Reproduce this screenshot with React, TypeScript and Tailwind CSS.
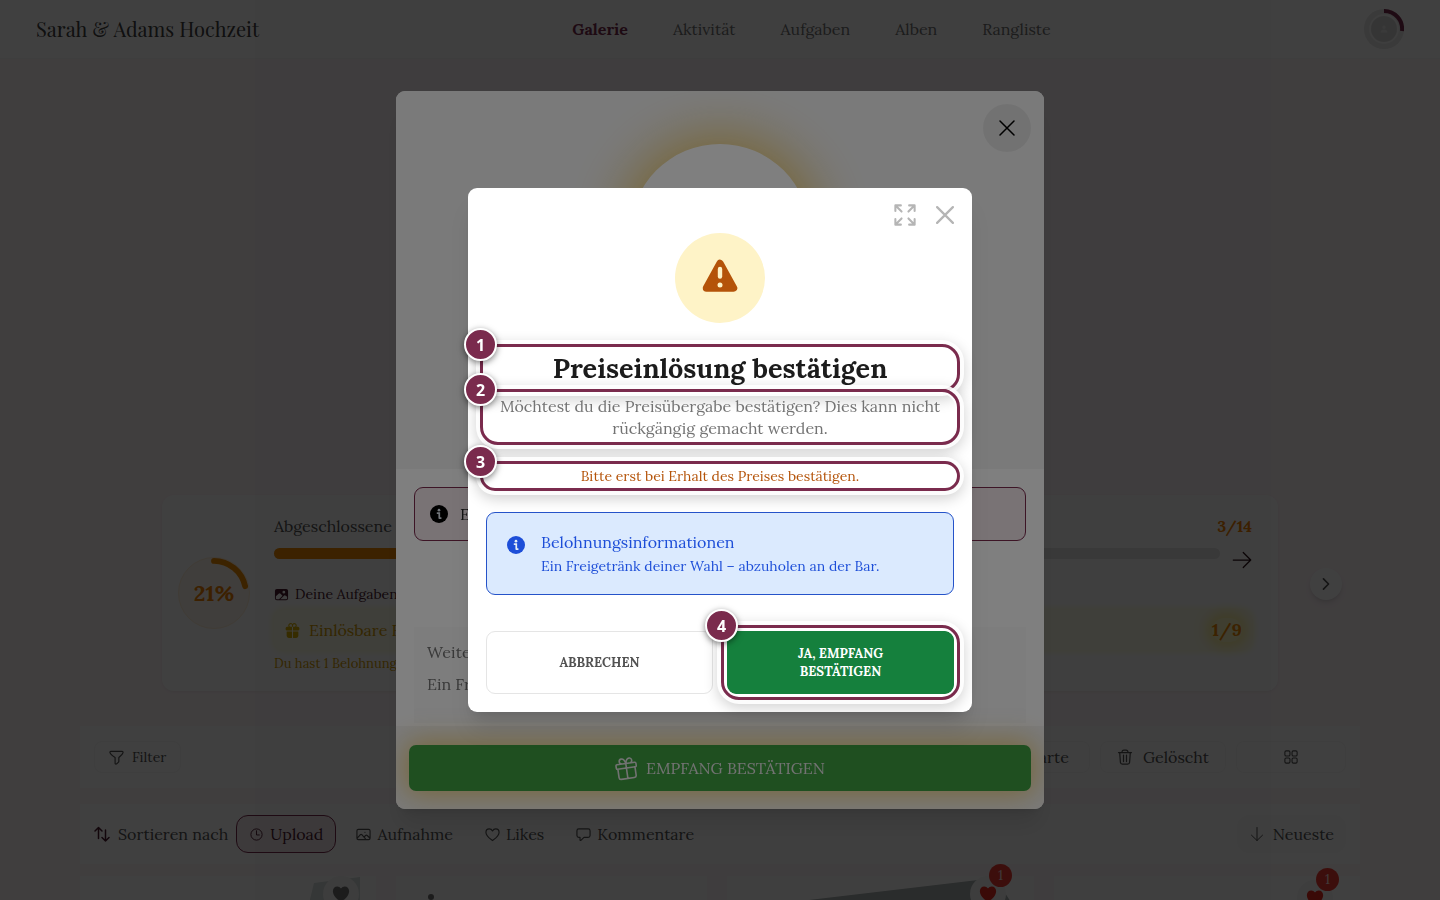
import React from "react";
import {
  IoGift, IoImage, IoTimeOutline, IoHeartOutline, IoChevronForward, IoHeart, IoPerson,
} from "react-icons/io5";

const SERIF = "font-['Lora','Liberation_Serif',serif]";

type IconProps = { d: string; size?: number; width?: number; className?: string };

function Line({ d, size = 16, width = 1.25, className = "" }: IconProps) {
  return (
    <svg width={size} height={size} viewBox="0 0 16 16" fill="none" stroke="currentColor" strokeWidth={width} strokeLinecap="round" strokeLinejoin="round" className={"shrink-0 " + className} aria-hidden="true">
      <path d={d} />
    </svg>
  );
}

const PATHS = {
  funnel: "M2 1.5h12c.8 0 1.2.7.9 1.4C14.300 4.700 12.500 6 10.500 8v4c0 .5-.2.9-.6 1.200l-1.700 1.500c-.8.600-1.700.300-1.700-.700V8C3.500 6 1.700 4.700 1.100 2.900.8 2.200 1.200 1.500 2 1.500z",
  trash: "M1.500 3.500h13M5 3.300C5 1.800 5.800 1 7 1h2c1.200 0 2 .8 2 2.300M2.700 3.500l.7 9.700c.1 1.200.8 1.800 1.900 1.800h5.400c1.100 0 1.800-.6 1.900-1.800l.7-9.700M6.500 6v6.500M9.500 6v6.500",
  grid: "M2.500 1h2.800q1.500 0 1.500 1.500v2.800q0 1.500-1.500 1.500H2.500Q1 6.800 1 5.300V2.500Q1 1 2.500 1zM10.700 1h2.800q1.500 0 1.500 1.500v2.800q0 1.500-1.500 1.500h-2.800q-1.500 0-1.500-1.500V2.500Q9.200 1 10.700 1zM2.500 9.200h2.800q1.500 0 1.500 1.500v2.800q0 1.500-1.500 1.500H2.500Q1 15 1 13.500v-2.800q0-1.500 1.500-1.500zM10.700 9.200h2.800q1.500 0 1.500 1.500v2.800q0 1.500-1.500 1.500h-2.800q-1.500 0-1.500-1.500v-2.800q0-1.500 1.500-1.500z",
  sort: "M4.500 12.500V1.500M1 5l3.500-3.500L8 5M11.500 4v11M8 11.500l3.500 3.500 3.500-3.500",
  image: "M2.500 2.500h11q1.500 0 1.500 1.500v8q0 1.500-1.500 1.500h-11Q1 13.500 1 12V4q0-1.500 1.500-1.500zM1.500 11.500l3-3.200c.6-.6 1.300-.6 1.900 0l3.600 4M8.800 10.500l1.400-1.400c.6-.6 1.200-.6 1.800 0l2.700 2.600M9.500 5.600h.1",
  chat: "M3 2h10q2 0 2 2v5q0 2-2 2H8.500l-3.300 3.200c-.4.4-.9.2-.9-.4V11H3Q1 11 1 9V4q0-2 2-2z",
  down: "M8 1.500v13M2.500 9.200 8 14.500l5.500-5.300",
  right: "M1 8h14M9 2l6 6-6 6",
  close: "M1 1l14 14M15 1 1 15",
  expand: "M1 5V1h4M1.300 1.300l4.200 4.200M11 1h4v4M14.700 1.300l-4.200 4.200M1 11v4h4M1.300 14.700l4.200-4.200M15 11v4h-4M14.700 14.700l-4.200-4.200",
  gift: "M1.800 4.500h12.400q.8 0 .8.800v1.600q0 .8-.8.800H1.800Q1 7.700 1 6.900V5.300q0-.8.800-.8zM2 7.700v5.800q0 1.500 1.500 1.500h9q1.500 0 1.500-1.500V7.700M8 4.500V15M8 4.500C7.500 2 6.300 1 5.200 1 3.300 1 3 4 5 4.500M8 4.500C8.500 2 9.700 1 10.800 1c1.900 0 2.200 3 .2 3.500",
};

function InfoIcon({ className = "" }: { className?: string }) {
  return (
    <svg width="18" height="18" viewBox="0 0 20 20" className={"shrink-0 " + className} aria-hidden="true">
      <circle cx="10" cy="10" r="10" fill="currentColor" />
      <circle cx="10" cy="5.700" r="1.500" fill="#e4ecf6" />
      <path d="M8.300 9h2v5.200M10.300 14.500h1.700" fill="none" stroke="#e4ecf6" strokeWidth="1.900" strokeLinecap="round" />
    </svg>
  );
}

function WarningIcon() {
  return (
    <svg width="36" height="34" viewBox="0 0 36 34" className="mb-1" aria-hidden="true">
      <path d="M18 4.500 31.500 29h-27z" fill="#b45309" stroke="#b45309" strokeWidth="7.500" strokeLinejoin="round" />
      <path d="M18 10v7.500" stroke="#fef3c7" strokeWidth="4.400" strokeLinecap="round" />
      <circle cx="18" cy="26" r="2.500" fill="#fef3c7" />
    </svg>
  );
}

function Marker({ n }: { n: number }) {
  return (
    <>
      <span
        aria-hidden="true"
        className="pointer-events-none absolute -inset-1.5 rounded-[18px] border-[3px] border-[#7a2b4d] shadow-[0_0_0_4px_rgba(255,255,255,0.9),0_4px_14px_4px_rgba(0,0,0,0.18),inset_0_0_0_2px_rgba(255,255,255,0.9)]"
      />
      <span className="absolute -top-[22px] -left-[22px] z-10 flex size-[33px] items-center justify-center rounded-full border-2 border-white bg-[#7a2b4d] font-['Noto_Sans',sans-serif] text-[16px] leading-none font-bold text-white shadow-[0_2px_6px_rgba(0,0,0,0.5)]">
        {n}
      </span>
    </>
  );
}

function Header() {
  const links = ["Galerie", "Aktivität", "Aufgaben", "Alben", "Rangliste"];
  return (
    <header className="flex h-[59px] items-center justify-between border-b border-neutral-100 bg-white px-9">
      <a href="#start" className="font-['Playfair_Display','Liberation_Serif',serif] text-[20px] leading-8 text-neutral-700">Sarah &amp; Adams Hochzeit</a>
      <nav className="flex gap-[45px] text-[16px] leading-6 text-neutral-500">
        {links.map((l, i) => (
          <a key={l} href={"#" + l} className={i === 0 ? "font-bold text-[#7a2b4d]" : ""}>{l}</a>
        ))}
      </nav>
      <button aria-label="Profil" className="relative flex size-10 items-center justify-center rounded-full bg-neutral-200">
        <span className="flex size-[30px] items-center justify-center rounded-full border-2 border-neutral-100 bg-neutral-300 text-neutral-200"><IoPerson size={8} /></span>
        <svg className="absolute inset-0" viewBox="0 0 40 40" fill="none" stroke="#7a2b4d" strokeWidth="4">
          <path d="M20 2a18 18 0 0 1 18 20" />
        </svg>
      </button>
    </header>
  );
}

function Progress() {
  return (
    <section className="relative mx-[162px] mt-[436px] flex h-[196px] items-center gap-6 rounded-xl bg-white pr-[26px] pl-4 shadow-[0_1px_3px_rgba(0,0,0,0.06)]">
      <div className="relative flex size-[72px] shrink-0 items-center justify-center rounded-full border border-orange-100 bg-orange-50 text-[22px] font-bold text-[#f08000]">
        21%
        <svg className="absolute inset-0" viewBox="0 0 72 72" fill="none" stroke="#f08a00" strokeWidth="6" strokeLinecap="round">
          <path d="M36 3a33 33 0 0 1 32 26" />
        </svg>
      </div>
      <div className="flex min-w-0 grow flex-col pt-0.5">
        <div className="flex justify-between text-[16px] leading-6">
          <span className="text-neutral-600">Abgeschlossene Fotoaufgaben</span>
          <span className="font-bold text-[#f08000]">3/14</span>
        </div>
        <div className="flex h-11 items-center gap-3">
          <div className="mb-3.5 h-[11px] grow rounded-full bg-neutral-200"><div className="h-full w-[21%] rounded-full bg-[#f08a00]" /></div>
          <Line d={PATHS.right} size={20} width={1} className="text-[#2a1018]" />
        </div>
        <div className="flex items-center gap-1.5 text-[14px] leading-6 text-[#4a1a2e]"><IoImage size={15} />Deine Aufgaben-Fotos</div>
        <div className="mt-1 flex h-10 items-center justify-between rounded-lg bg-yellow-50 px-2.5 text-[16px] shadow-[0_0_8px_#fef9c3]">
          <span className="flex items-center gap-2 text-[#d19a00]"><IoGift size={17} className="text-[#d9b000]" />Einlösbare Belohnungen</span>
          <span className="rounded-full bg-yellow-100 text-[18px] leading-6 font-bold text-[#f08a00] shadow-[0_0_12px_6px_#fef3a0]">1/9</span>
        </div>
        <p className="mt-1 text-[13px] leading-5 text-[#d19a00]">Du hast 1 Belohnung zum Einlösen</p>
      </div>
      <button aria-label="Weiter" className="absolute top-[73px] -right-16 flex size-8 items-center justify-center rounded-full bg-white text-neutral-600 shadow-md"><IoChevronForward size={18} /></button>
    </section>
  );
}

const pill = "flex h-[38px] items-center gap-1.5 rounded-xl px-3";
const boxed = "flex h-8 items-center justify-center rounded-lg border border-[#f6f6f6]";

function Toolbars() {
  return (
    <div className="mx-20 text-[16px] text-neutral-600">
      <section className="mt-[35px] flex h-[62px] items-center justify-between bg-white px-3.5">
        <button className={boxed + " gap-2 px-3.5 text-[14px]"}><Line d={PATHS.funnel} size={15} />Filter</button>
        <div className="flex items-center gap-2.5">
          <button className={boxed + " px-5"}>Karte</button>
          <button className={boxed + " gap-2.5 px-4"}><Line d={PATHS.trash} />Gelöscht</button>
          <button aria-label="Rasteransicht" className={boxed + " w-[110px]"}><Line d={PATHS.grid} size={14} /></button>
        </div>
      </section>
      <section className="mt-4 flex h-[60px] items-center justify-between bg-white px-3.5">
        <div className="flex items-center gap-2">
          <span className="flex items-center gap-2"><Line d={PATHS.sort} width={1.5} className="text-[#4a1a2e]" />Sortieren nach</span>
          <button className={pill + " border border-[#7a2b4d] bg-[#f3e6eb] text-[#4a1a2e]"}><IoTimeOutline size={15} />Upload</button>
          <button className={pill}><Line d={PATHS.image} size={15} />Aufnahme</button>
          <button className={pill}><Line d="M8 14.500C4 11.500 1 9.500 1 5.800 1 3.500 2.600 2 4.500 2 6 2 7.300 2.800 8 4.200 8.700 2.800 10 2 11.500 2 13.400 2 15 3.500 15 5.800c0 3.700-3 5.700-7 8.700z" size={15} />Likes</button>
          <button className={pill}><Line d={PATHS.chat} size={15} />Kommentare</button>
        </div>
        <button className={pill + " bg-neutral-50"}><Line d={PATHS.down} width={1} className="mr-0.5" />Neueste</button>
      </section>
    </div>
  );
}

function Likes({ count }: { count?: number }) {
  return (
    <span className={"relative flex size-9 items-center justify-center rounded-full bg-neutral-100 " + (count ? "text-[#e8281e]" : "text-neutral-500")}>
      <IoHeart size={20} />
      {count && <span className="absolute -top-3 -right-1.5 flex size-[23px] items-center justify-center rounded-full bg-[#f03a30] text-[14px] text-red-100">{count}</span>}
    </span>
  );
}

function Gallery() {
  return (
    <section className="mx-20 mt-3 flex gap-5">
      <article className="relative flex h-44 flex-1 justify-end bg-white pr-[17px]">
        <svg className="absolute top-0 right-4 h-12 w-14" viewBox="0 0 56 48"><path d="M10 7 56 1v47H0z" fill="#d5dddc" /></svg>
        <Likes />
      </article>
      <article className="h-44 flex-1 bg-white pt-[18px] pl-8"><span className="block size-1.5 rounded-full bg-neutral-500" /></article>
      <article className="relative flex h-44 flex-1 justify-end bg-white pr-7">
        <svg className="absolute inset-0 h-full w-full" viewBox="0 0 300 176" preserveAspectRatio="none"><path d="M80 24 262 2 280 30v146H0z" fill="#a9b0b0" /></svg>
        <Likes count={1} />
      </article>
      <article className="flex h-44 flex-1 justify-end bg-white pt-1 pr-[27px]"><Likes count={1} /></article>
    </section>
  );
}

function RewardDialog() {
  return (
    <div role="dialog" aria-label="Belohnung" className="relative flex h-[718px] w-full max-w-[648px] flex-col overflow-hidden rounded-[9px] bg-white shadow-xl">
      <div className="flex h-[378px] justify-center bg-[#f5f5f5] pt-[53px]">
        <div className="size-[180px] rounded-full bg-white shadow-[0_0_54px_8px_rgba(234,170,0,0.6)]" />
      </div>
      <button aria-label="Schließen" className="absolute top-[13px] right-[13px] flex size-12 items-center justify-center rounded-full bg-[#e5e5e5] text-black"><Line d={PATHS.close} size={16} width={1.5} /></button>
      <div className="flex grow flex-col px-[18px] pt-[18px]">
        <p className="flex h-[54px] items-center gap-3 rounded-[9px] border border-[#7a2b4d] bg-[#f3e6eb] px-[15px] text-[16px] text-neutral-800"><InfoIcon className="text-black" />Einlösen nur vor Ort</p>
        <div className="mt-[86px] h-24 bg-[#fafafa] px-[13px] pt-[9px] text-[16px] leading-8 text-neutral-500">
          <p>Weitere Informationen</p>
          <p>Ein Freigetränk deiner Wahl</p>
        </div>
      </div>
      <footer className="bg-[#f5f5f5] px-[13px] pt-[19px] pb-[18px]">
        <button className="flex h-[46px] w-full items-center justify-center gap-2 rounded-[7px] bg-[#3f9f41] text-[16px] text-neutral-200 shadow-[0_0_28px_4px_rgba(234,170,0,0.5)]">
          <Line d={PATHS.gift} size={23} width={1.1} className="-rotate-8" />EMPFANG BESTÄTIGEN
        </button>
      </footer>
    </div>
  );
}

function ConfirmDialog() {
  return (
    <div role="alertdialog" aria-labelledby="confirm-title" className="relative w-full max-w-[504px] rounded-[9px] bg-white px-[18px] pt-[45px] pb-[18px] text-center shadow-xl">
      <div className="absolute top-4 right-[18px] flex items-center gap-5 text-[#b5b5b5]">
        <button aria-label="Vollbild"><Line d={PATHS.expand} size={22} width={1.5} /></button>
        <button aria-label="Schließen"><Line d={PATHS.close} size={18} width={2} /></button>
      </div>
      <div className="mx-auto flex size-[90px] items-center justify-center rounded-full bg-[#fef3c7]"><WarningIcon /></div>
      <div className="relative mt-[27px]">
        <h2 id="confirm-title" className="text-[27px] leading-9 font-bold text-[#1c1c1c]">Preiseinlösung bestätigen</h2>
        <Marker n={1} />
      </div>
      <div className="relative mt-[9px]">
        <p className="px-2 text-[16px] leading-[22px] text-[#737373]">Möchtest du die Preisübergabe bestätigen? Dies kann nicht rückgängig gemacht werden.</p>
        <Marker n={2} />
      </div>
      <div className="relative mt-7">
        <p className="text-[14px] leading-[18px] text-[#b45309]">Bitte erst bei Erhalt des Preises bestätigen.</p>
        <Marker n={3} />
      </div>
      <div className="mt-[27px] flex h-[83px] items-center gap-4 rounded-[9px] border border-[#2553c9] bg-[#dbeafe] px-5 text-left text-[#1d4ed8]">
        <InfoIcon className="mb-[18px]" />
        <div>
          <p className="text-[16px] leading-6">Belohnungsinformationen</p>
          <p className="text-[14px] leading-6">Ein Freigetränk deiner Wahl – abzuholen an der Bar.</p>
        </div>
      </div>
      <div className="mt-9 grid grid-cols-2 gap-3.5 text-[13px] leading-[18px] font-bold">
        <button className="h-[63px] rounded-[9px] border border-neutral-200 text-[#525252]">ABBRECHEN</button>
        <div className="relative">
          <button className="h-[63px] w-full rounded-[9px] bg-[#15803d] px-12 text-white">JA, EMPFANG BESTÄTIGEN</button>
          <Marker n={4} />
        </div>
      </div>
    </div>
  );
}

export default function App() {
  return (
    <div className={"h-screen overflow-hidden bg-[#fff5f8] " + SERIF}>
      <Header />
      <main>
        <Progress />
        <Toolbars />
        <Gallery />
      </main>
      <div className="fixed inset-0 flex items-center justify-center bg-black/50"><RewardDialog /></div>
      <div className="fixed inset-0 flex items-center justify-center bg-black/50"><ConfirmDialog /></div>
    </div>
  );
}
